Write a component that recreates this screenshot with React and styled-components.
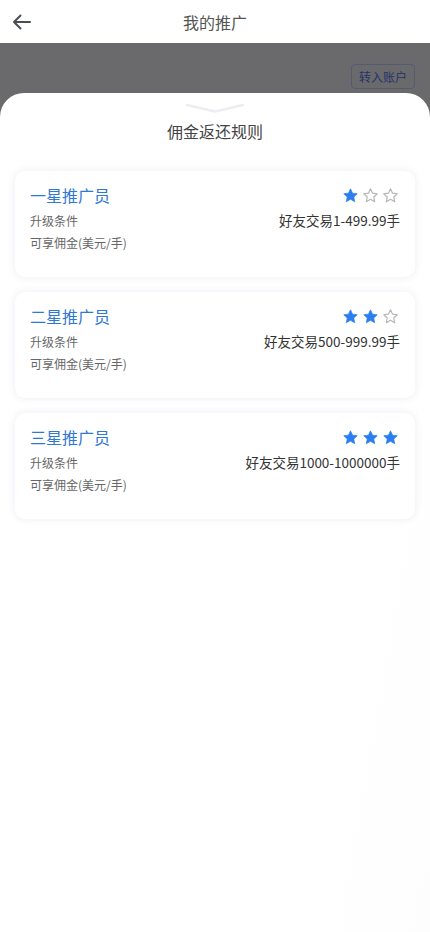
import styled, { createGlobalStyle } from 'styled-components'

const GlobalStyle = createGlobalStyle`
  html, body {
    margin: 0;
    padding: 0;
    background: #ffffff;
  }
  body {
    font-family: "Noto Sans CJK SC", "Noto Sans", sans-serif;
  }
`

const levels = [
  { name: '一星推广员', stars: 1, range: '好友交易1-499.99手' },
  { name: '二星推广员', stars: 2, range: '好友交易500-999.99手' },
  { name: '三星推广员', stars: 3, range: '好友交易1000-1000000手' },
]

function Star({ on }) {
  return (
    <svg width="17" height="17" viewBox="0 0 24 24">
      <path
        d="M12 2.6l2.9 6.1 6.6.8-4.9 4.6 1.3 6.6L12 17.4l-5.9 3.3 1.3-6.6-4.9-4.6 6.6-.8z"
        fill={on ? '#2a7ef0' : 'none'}
        stroke={on ? '#2a7ef0' : '#b4b4b8'}
        strokeWidth={on ? 1 : 1.6}
        strokeLinejoin="round"
      />
    </svg>
  )
}

function App() {
  return (
    <Page>
      <GlobalStyle />
      <Header>
        <BackButton>
          <svg width="19" height="16" viewBox="0 0 19 16">
            <path d="M18 8H2M8.5 1.5L2 8l6.5 6.5" fill="none" stroke="#4a4d52" strokeWidth="2" strokeLinecap="round" strokeLinejoin="round" />
          </svg>
        </BackButton>
        <HeaderTitle>我的推广</HeaderTitle>
      </Header>

      <Overlay>
        <TransferButton>转入账户</TransferButton>
      </Overlay>

      <Sheet>
        <Handle>
          <svg width="58" height="10" viewBox="0 0 58 10">
            <path d="M1 2L29 8.5L57 2" fill="none" stroke="#eceef2" strokeWidth="2.5" strokeLinecap="round" strokeLinejoin="round" />
          </svg>
        </Handle>
        <SheetTitle>佣金返还规则</SheetTitle>

        <CardList>
          {levels.map((lv) => (
            <Card key={lv.name}>
              <Row>
                <LevelName>{lv.name}</LevelName>
                <Stars>
                  {[1, 2, 3].map((i) => (
                    <Star key={i} on={i <= lv.stars} />
                  ))}
                </Stars>
              </Row>
              <Row>
                <Label>升级条件</Label>
                <Value>{lv.range}</Value>
              </Row>
              <Row>
                <Label>可享佣金(美元/手)</Label>
              </Row>
            </Card>
          ))}
        </CardList>
      </Sheet>
    </Page>
  )
}

export default App

const Page = styled.div`
  width: 430px;
  min-height: 932px;
  display: flex;
  flex-direction: column;
  background: #ffffff;
`

const Header = styled.div`
  position: relative;
  height: 43px;
  display: flex;
  align-items: center;
  justify-content: center;
  background: #ffffff;
`

const BackButton = styled.div`
  position: absolute;
  left: 12px;
  top: 14px;
  display: flex;
`

const HeaderTitle = styled.div`
  font-size: 16px;
  color: #555;
`

const Overlay = styled.div`
  height: 74px;
  background: #6a6a6d;
  display: flex;
  justify-content: flex-end;
  align-items: flex-start;
  padding: 21px 15px 0 0;
  box-sizing: border-box;
`

const TransferButton = styled.div`
  width: 64px;
  height: 25px;
  box-sizing: border-box;
  border: 1px solid #545a72;
  border-radius: 4px;
  display: flex;
  align-items: center;
  justify-content: center;
  font-size: 12px;
  color: #273266;
`

const Sheet = styled.div`
  flex: 1;
  margin-top: -24px;
  background: linear-gradient(100deg, #ffffff 80%, #fdfdfe 100%);
  border-radius: 24px 24px 0 0;
  display: flex;
  flex-direction: column;
  align-items: center;
`

const Handle = styled.div`
  padding-top: 10px;
  height: 10px;
  display: flex;
`

const SheetTitle = styled.div`
  margin-top: 7px;
  font-size: 16px;
  color: #444;
  line-height: 22px;
`

const CardList = styled.div`
  margin-top: 29px;
  width: 400px;
  display: flex;
  flex-direction: column;
  gap: 15px;
`

const Card = styled.div`
  height: 106px;
  box-sizing: border-box;
  padding: 12px 15px 0 15px;
  background: #ffffff;
  border-radius: 10px;
  box-shadow: 0 0 8px rgba(40, 60, 120, 0.09);
  display: flex;
  flex-direction: column;
  gap: 2px;
`

const Row = styled.div`
  display: flex;
  justify-content: space-between;
  align-items: center;
  min-height: 20px;

  &:first-child {
    min-height: 24px;
    margin-bottom: 1px;
  }
`

const LevelName = styled.div`
  font-size: 16px;
  color: #2f78d3;
`

const Stars = styled.div`
  display: flex;
  gap: 3px;
  margin-right: 1px;
`

const Label = styled.div`
  font-size: 12px;
  color: #666;
`

const Value = styled.div`
  font-size: 13.5px;
  color: #333;
`
